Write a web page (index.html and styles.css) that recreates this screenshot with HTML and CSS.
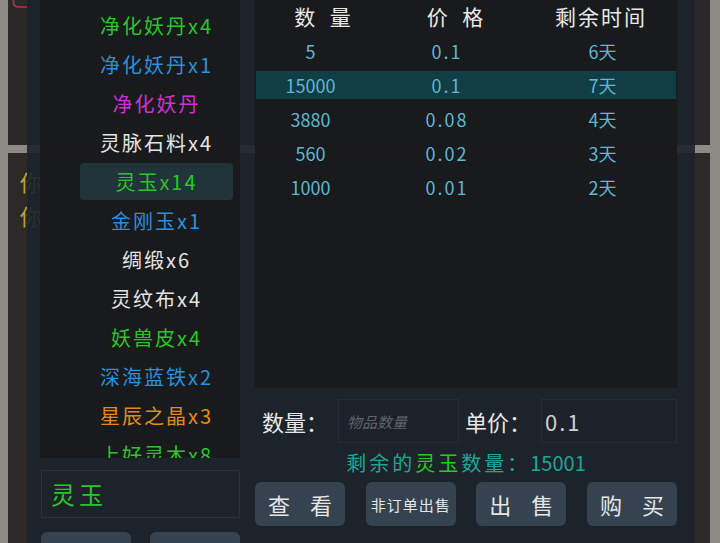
FILE: index.html
```html
<!DOCTYPE html>
<html lang="zh-CN">
<head>
    <meta charset="UTF-8">
    <meta name="viewport" content="width=device-width, initial-scale=1.0">
    <title>交易行</title>
    <link rel="stylesheet" href="styles.css">
</head>
<body>
    <!-- game window behind the trade dialog -->
    <div class="backdrop">
        <div class="bg-top">
            <svg class="mark" width="18" height="9" viewBox="0 0 18 9">
                <path d="M1.5 0 V2 Q1.5 7 7 7 H18" fill="none" stroke="#b8304a" stroke-width="1.6"/>
            </svg>
        </div>
        <div class="bg-bottom">
            <p class="ghost">你</p>
            <p class="ghost">你</p>
        </div>
    </div>

    <div class="modal">
        <div class="left">
            <ul class="items">
                <li class="green">净化妖丹x4</li>
                <li class="blue">净化妖丹x1</li>
                <li class="purple">净化妖丹</li>
                <li class="white">灵脉石料x4</li>
                <li class="green active">灵玉x14</li>
                <li class="blue">金刚玉x1</li>
                <li class="white">绸缎x6</li>
                <li class="white">灵纹布x4</li>
                <li class="green">妖兽皮x4</li>
                <li class="blue">深海蓝铁x2</li>
                <li class="orange">星辰之晶x3</li>
                <li class="green">上好灵木x8</li>
            </ul>
            <div class="search">灵玉</div>
            <div class="left-btns">
                <button aria-label="清空"></button>
                <button aria-label="搜索"></button>
            </div>
        </div>

        <div class="right">
            <div class="orders">
                <div class="head">
                    <span class="spread">数 量</span>
                    <span class="spread">价 格</span>
                    <span class="time">剩余时间</span>
                </div>
                <div class="row"><span>5</span><span class="price">0.1</span><span>6天</span></div>
                <div class="row selected"><span>15000</span><span class="price">0.1</span><span>7天</span></div>
                <div class="row"><span>3880</span><span class="price">0.08</span><span>4天</span></div>
                <div class="row"><span>560</span><span class="price">0.02</span><span>3天</span></div>
                <div class="row"><span>1000</span><span class="price">0.01</span><span>2天</span></div>
            </div>

            <div class="form">
                <label class="label" for="qty">数量：</label>
                <input class="field qty" id="qty" type="text" placeholder="物品数量">
                <label class="label second" for="unit">单价：</label>
                <input class="field unit" id="unit" type="text" value="0.1">
            </div>

            <p class="remain">剩余的<span class="hl">灵玉</span>数量：<span class="num">15001</span></p>

            <div class="actions">
                <button class="wide">查 看</button>
                <button class="small">非订单出售</button>
                <button class="wide">出 售</button>
                <button class="wide">购 买</button>
            </div>
        </div>
    </div>
</body>
</html>
```

FILE: styles.css
```css
/* Trade dialog */
body {
    margin: 0;
    width: 720px;
    height: 543px;
    overflow: hidden;
    position: relative;
    background-color: #8d8985;
    font-family: "Noto Sans CJK SC", sans-serif;
}

/* background game ui */
.backdrop {
    height: 543px;
    padding: 0 10px 0 8px;
    box-sizing: border-box;
    display: flex;
    flex-direction: column;
    gap: 8px;
}
.bg-top {
    height: 145px;
    flex: none;
    background-color: #2a2928;
}
.mark {
    display: block;
    margin-left: 4px;
}
.bg-bottom {
    flex: 1;
    background-color: #2c2927;
    padding: 16px 0 0 12px;
}
.ghost {
    margin: 0 0 9px;
    font-size: 22px;
    line-height: 25px;
    color: #b8a540;
}

/* dialog */
.modal {
    position: absolute;
    top: 0;
    left: 27px;
    width: 668px;
    height: 543px;
    box-sizing: border-box;
    padding: 0 18px 0 13px;
    background-color: rgba(28, 34, 43, 0.9);
    display: flex;
    gap: 15px;
}
.left {
    width: 200px;
    flex: none;
    display: flex;
    flex-direction: column;
}
.items {
    flex: none;
    list-style: none;
    margin: 0;
    padding: 7px 7px 0 40px;
    height: 458px;
    box-sizing: border-box;
    overflow: hidden;
    background-color: rgba(26, 26, 28, 0.94);
    display: flex;
    flex-direction: column;
    gap: 2px;
}
.items li {
    flex: none;
    height: 37px;
    line-height: 37px;
    text-align: center;
    font-size: 20px;
    letter-spacing: 2px;
    border-radius: 4px;
}
.items li.active {
    background-color: #20343a;
}
.green { color: #2bc42b; }
.blue { color: #2a8fdc; }
.purple { color: #d22fd2; }
.white { color: #e4e4e4; }
.orange { color: #e08a1e; }

.search {
    flex: none;
    margin: 12px 0 0 1px;
    height: 48px;
    box-sizing: border-box;
    border: 1px solid #2b313a;
    background-color: #1e232b;
    padding-left: 9px;
    font-size: 24px;
    line-height: 46px;
    color: #2bc42b;
    letter-spacing: 4px;
}
.left-btns {
    flex: none;
    margin: 14px 0 0 1px;
    display: flex;
    gap: 19px;
}

button {
    flex: none;
    width: 90px;
    height: 44px;
    padding: 0;
    border: none;
    border-radius: 6px;
    background-color: #35424f;
    color: #e6e6e6;
    font-family: inherit;
    font-size: 22px;
    white-space: nowrap;
    cursor: pointer;
}
button.wide {
    word-spacing: 15px;
}
button.small {
    font-size: 15px;
    letter-spacing: 1px;
}

/* order table */
.right {
    flex: 1;
    min-width: 0;
    display: flex;
    flex-direction: column;
}
.orders {
    flex: none;
    height: 388px;
    box-sizing: border-box;
    padding: 0 1px;
    background-color: rgba(26, 26, 28, 0.94);
}
.head {
    display: grid;
    grid-template-columns: 133px 132px 1fr;
    align-items: center;
    height: 31px;
    text-align: center;
    color: #e8e8e8;
    font-size: 21px;
}
.head .time {
    padding-left: 5px;
    letter-spacing: 2px;
}
.spread {
    word-spacing: 10px;
}
.row {
    display: grid;
    grid-template-columns: 109px 164px 1fr;
    align-items: center;
    height: 28px;
    margin-top: 6px;
    text-align: center;
    color: #5cb8d6;
    font-size: 18px;
}
.row.selected {
    background-color: #113e44;
}
.price {
    letter-spacing: 2px;
}

/* sell / buy form */
.form {
    flex: none;
    margin-top: 11px;
    height: 44px;
    padding-left: 7px;
    display: flex;
    align-items: center;
}
.label {
    flex: none;
    width: 76px;
    font-size: 22px;
    color: #e8e8e8;
}
.label.second {
    margin-left: 6px;
}
.field {
    height: 44px;
    box-sizing: border-box;
    border: 1px solid #262c35;
    background-color: #1d222a;
    font-family: inherit;
    outline: none;
}
.field.qty {
    flex: none;
    width: 121px;
    padding-left: 8px;
    font-size: 15px;
    color: #cfcfcf;
}
.field.qty::placeholder {
    color: #5f646b;
    font-style: italic;
}
.field.unit {
    flex: 1;
    width: 0;
    min-width: 0;
    padding-left: 3px;
    font-size: 22px;
    color: #cfcfcf;
    letter-spacing: 2px;
}
.remain {
    flex: none;
    margin: 8px 0 0;
    text-align: center;
    font-size: 20px;
    line-height: 24px;
    color: #1fa596;
    letter-spacing: 3px;
}
.remain .hl {
    color: #22cc22;
}
.remain .num {
    letter-spacing: 0;
}
.actions {
    flex: none;
    margin-top: 7px;
    display: flex;
    justify-content: space-between;
}
```
